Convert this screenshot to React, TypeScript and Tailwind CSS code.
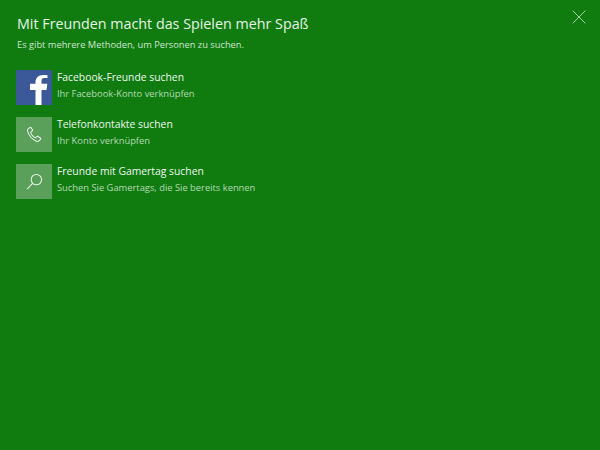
import { X } from 'lucide-react';

const ROWS = [
  { icon: 'facebook', title: 'Facebook-Freunde suchen', sub: 'Ihr Facebook-Konto verknüpfen' },
  { icon: 'phone', title: 'Telefonkontakte suchen', sub: 'Ihr Konto verknüpfen' },
  { icon: 'search', title: 'Freunde mit Gamertag suchen', sub: 'Suchen Sie Gamertags, die Sie bereits kennen' },
];

function RowIcon({ icon }: { icon: string }) {
  if (icon === 'facebook') {
    return (
      <div className="w-9 h-[35px] bg-[#3b5998] overflow-hidden">
        <svg viewBox="0 0 36 36" className="w-9 h-9">
          <path d="M25.5 36V20h5l.8-6.2h-5.800v-3c0-1.800.6-2.900 3-2.900h3V5.300c-.6-.1-2.300-.3-4.400-.3-4.400 0-7.600 2.700-7.600 7.600v1.200H14V20h5.500v16z" fill="#fff" />
        </svg>
      </div>
    );
  }
  return (
    <div className="w-9 h-[35px] bg-[#5a9f5a] flex items-center justify-center">
      {icon === 'phone' ? (
        <svg viewBox="0 0 18 18" className="w-[17px] h-[17px]" fill="none" stroke="#e8f4e8" strokeWidth="1.1" strokeLinejoin="round">
          <path d="M4.3 1.500 2.200 3c-.7.500-.8 1.400-.6 2.200.6 2.400 1.800 4.700 3.500 6.700 1.800 2 3.800 3.500 6 4.300 1.100.4 2.100.2 2.900-.6l1.500-1.600c.3-.3.3-.7 0-1l-2.700-2.100c-.3-.2-.7-.2-1 .1l-1.100 1.200c-.3.3-.7.3-1.100.1-1.300-.7-2.300-1.700-3.200-2.800-.6-.8-1-1.600-1.300-2.400-.1-.4 0-.7.3-1l1.300-1c.3-.2.4-.6.2-1L5.300 1.700c-.3-.4-.7-.4-1-.2z" />
        </svg>
      ) : (
        <svg viewBox="0 0 18 18" className="w-[17px] h-[17px]" fill="none" stroke="#e8f4e8" strokeWidth="1.1">
          <circle cx="11" cy="7" r="5.5" />
          <path d="M7 11 1 17" />
        </svg>
      )}
    </div>
  );
}

export default function App() {
  return (
    <div className="relative w-[600px] h-[450px] overflow-hidden bg-[#107c10] text-white font-['Open_Sans',sans-serif] px-4 pt-[14px]">
      <button className="absolute top-[5px] right-[9px] text-[#a5d3a5]">
        <X size={24} strokeWidth={1} />
      </button>

      <h1 className="text-[14.3px] leading-5 text-[#e6f3e6] ml-px">Mit Freunden macht das Spielen mehr Spaß</h1>
      <p className="text-[9.3px] leading-3 mt-[5px] text-[#cfe6cf] ml-px">Es gibt mehrere Methoden, um Personen zu suchen.</p>

      <div className="flex flex-col gap-3 mt-[19px]">
        {ROWS.map((row) => (
          <div key={row.title} className="flex gap-[5px]">
            <RowIcon icon={row.icon} />
            <div className="-mt-px">
              <div className="text-[10.35px] leading-[17px] text-[#eef7ee]">{row.title}</div>
              <div className="text-[9.35px] leading-[14px] mt-[1px] text-[#b4d9b4]">{row.sub}</div>
            </div>
          </div>
        ))}
      </div>
    </div>
  );
}
